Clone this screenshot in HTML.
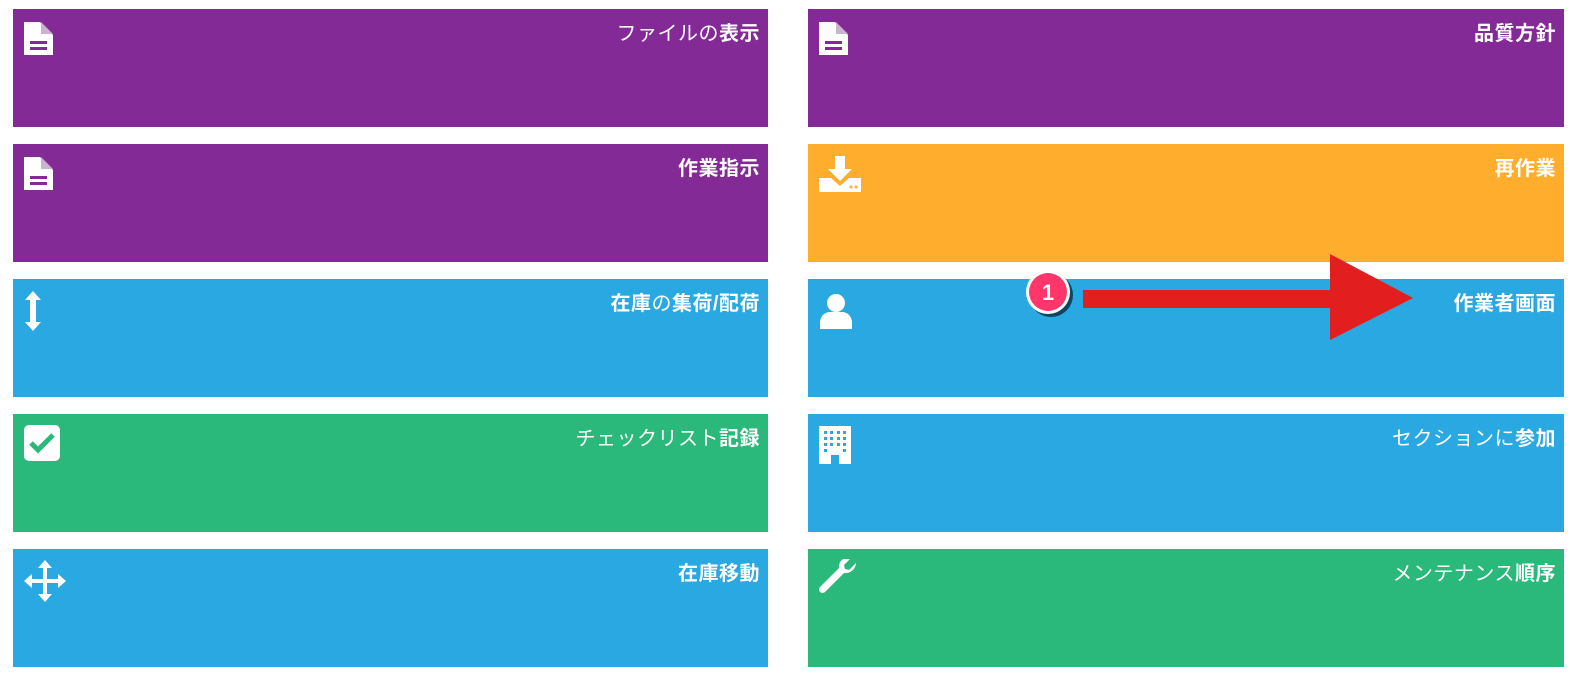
<!DOCTYPE html>
<html><head><meta charset="utf-8"><style>
body{margin:0;width:1589px;height:683px;background:#fff;position:relative;overflow:hidden;font-family:"Liberation Sans","Noto Sans CJK JP",sans-serif}
.t{position:absolute;height:118px;color:#fff}
.t .l{position:absolute;right:8px;top:8px;font-size:20px;letter-spacing:0.5px}
.t svg{position:absolute;left:10px;top:10px}
.p{background:#832a96}.o{background:#feae2c}.b{background:#29a8e2}.g{background:#2ab97a}
.L{left:13px;width:755px}.R{left:808px;width:756px}
</style></head><body>
<div class="t p L" style="top:9px"><svg width="34" height="38" viewBox="0 0 34 38"><path d="M1 3h16l13 13v20H1z" fill="#fff"/><path d="M18 3v12h12z" fill="#c9b4d0"/><rect x="7" y="22" width="17" height="3" fill="#832a96"/><rect x="7" y="28" width="17" height="3" fill="#832a96"/></svg><div class="l">ファイルの<b>表示</b></div></div>
<div class="t p L" style="top:144px"><svg width="34" height="38" viewBox="0 0 34 38"><path d="M1 3h16l13 13v20H1z" fill="#fff"/><path d="M18 3v12h12z" fill="#c9b4d0"/><rect x="7" y="22" width="17" height="3" fill="#832a96"/><rect x="7" y="28" width="17" height="3" fill="#832a96"/></svg><div class="l"><b>作業指示</b></div></div>
<div class="t b L" style="top:279px"><svg width="34" height="44" viewBox="0 0 34 44"><path d="M10 2l8 9h-5v22h5l-8 9-8-9h5V11H2z" fill="#fff"/></svg><div class="l"><b>在庫</b>の<b>集荷/配荷</b></div></div>
<div class="t g L" style="top:414px"><svg width="40" height="40" viewBox="0 0 40 40"><rect x="1" y="1" width="36" height="36" rx="5" fill="#fff"/><path d="M8 19l7 7 15-15" stroke="#2ab97a" stroke-width="5" fill="none"/></svg><div class="l">チェックリスト<b>記録</b></div></div>
<div class="t b L" style="top:549px"><svg width="44" height="44" viewBox="0 0 44 44"><path d="M22 1l7 8h-5v11h11v-5l8 7-8 7v-5H24v11h5l-7 8-7-8h5V24H9v5l-8-7 8-7v5h11V9h-5z" fill="#fff"/></svg><div class="l"><b>在庫移動</b></div></div>
<div class="t p R" style="top:9px"><svg width="34" height="38" viewBox="0 0 34 38"><path d="M1 3h16l13 13v20H1z" fill="#fff"/><path d="M18 3v12h12z" fill="#c9b4d0"/><rect x="7" y="22" width="17" height="3" fill="#832a96"/><rect x="7" y="28" width="17" height="3" fill="#832a96"/></svg><div class="l"><b>品質方針</b></div></div>
<div class="t o R" style="top:144px"><svg width="44" height="40" viewBox="0 0 44 40"><path d="M17 2h10v13h7l-12 12-12-12h7z" fill="#fff"/><path d="M1 24h12l9 8 9-8h12v14H1z" fill="#fff"/><circle cx="33" cy="33" r="1.5" fill="#feae2c"/><circle cx="38" cy="33" r="1.5" fill="#feae2c"/></svg><div class="l"><b>再作業</b></div></div>
<div class="t b R" style="top:279px"><svg width="40" height="40" viewBox="0 0 40 40"><circle cx="18" cy="14" r="9" fill="#fff"/><path d="M2 40v-6c0-7 5-11 10-11h12c5 0 10 4 10 11v6z" fill="#fff"/></svg><div class="l"><b>作業者画面</b></div></div>
<div class="t b R" style="top:414px"><svg width="40" height="44" viewBox="0 0 40 44"><rect x="1" y="2" width="32" height="38" fill="#fff"/><g fill="#29a8e2"><rect x="6" y="7" width="3" height="3"/><rect x="12" y="7" width="3" height="3"/><rect x="19" y="7" width="3" height="3"/><rect x="25" y="7" width="3" height="3"/><rect x="6" y="13" width="3" height="3"/><rect x="12" y="13" width="3" height="3"/><rect x="19" y="13" width="3" height="3"/><rect x="25" y="13" width="3" height="3"/><rect x="6" y="19" width="3" height="3"/><rect x="12" y="19" width="3" height="3"/><rect x="19" y="19" width="3" height="3"/><rect x="25" y="19" width="3" height="3"/><rect x="6" y="25" width="3" height="3"/><rect x="25" y="25" width="3" height="3"/><rect x="13" y="31" width="8" height="9"/></g></svg><div class="l">セクションに<b>参加</b></div></div>
<div class="t g R" style="top:549px"><svg width="44" height="44" viewBox="0 0 44 44"><path d="M38 4l-7 7-4-1-1-4 7-7c-6-2-13 3-12 10l-19 19a3 3 0 0 0 5 5l19-19c7 1 12-5 12-10z" fill="#fff"/></svg><div class="l">メンテナンス<b>順序</b></div></div>
<svg style="position:absolute;left:0;top:0" width="1589" height="683"><rect x="1083" y="290" width="250" height="18" fill="#e31e1e"/><path d="M1330 254L1413 298 1330 340z" fill="#e31e1e"/><circle cx="1051" cy="295" r="22" fill="#0d4660"/><circle cx="1048" cy="292" r="22" fill="#fff"/><circle cx="1048" cy="292" r="19" fill="#fe3669"/><text x="1048" y="300" text-anchor="middle" font-size="22" font-weight="bold" fill="#fff" font-family="Liberation Sans, sans-serif">1</text></svg>
</body></html>
